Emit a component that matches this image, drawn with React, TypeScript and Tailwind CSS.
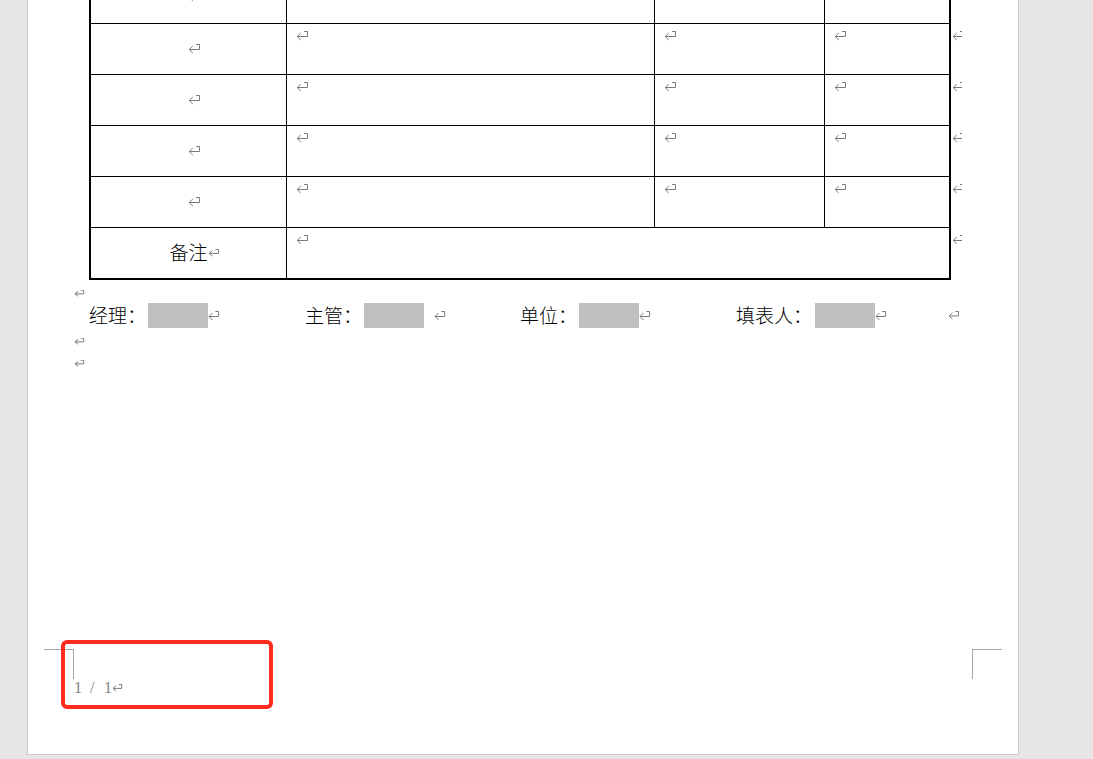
import React from "react";

function Ret({ w = 13, h = 10, className = "" }: { w?: number; h?: number; className?: string }) {
  return (
    <svg
      width={w}
      height={h}
      viewBox="0 0 13 10"
      preserveAspectRatio="none"
      className={"block shrink-0 " + className}
      fill="none"
      stroke="#7a7a7a"
      strokeWidth={1}
    >
      <path d="M8 0.5H11.5V5.5H1.2" vectorEffect="non-scaling-stroke" />
      <path d="M4.8 2L1.2 5.5L4.8 9" vectorEffect="non-scaling-stroke" />
    </svg>
  );
}

function Outside() {
  return (
    <div className="w-[11px] overflow-hidden pt-[7px] pl-[1px]">
      <Ret />
    </div>
  );
}

function BodyRow() {
  return (
    <div className="flex">
      <div className="flex h-[51px] w-[862px] border-b border-l-2 border-r-2 border-black">
        <div className="flex w-[196px] items-center justify-center border-r border-black pl-[12px]">
          <Ret />
        </div>
        <div className="w-[368px] border-r border-black pl-[9px] pt-[7px]">
          <Ret />
        </div>
        <div className="w-[170px] border-r border-black pl-[9px] pt-[7px]">
          <Ret />
        </div>
        <div className="flex-1 pl-[9px] pt-[7px]">
          <Ret />
        </div>
      </div>
      <Outside />
    </div>
  );
}

function Field({ label, labelW, gap = 0, groupW }: { label: string; labelW: string; gap?: number; groupW: string }) {
  return (
    <div className={"flex h-[25px] items-center " + groupW}>
      <span className={"translate-y-[2px] whitespace-nowrap " + labelW}>{label}</span>
      <div className="h-[25px] w-[60px] bg-[#c0c0c0]" />
      {gap ? <div className="w-[10px]" /> : null}
      <Ret w={12} h={10} />
    </div>
  );
}

export default function App() {
  return (
    <div className="h-[759px] w-[1093px] overflow-hidden bg-[#e6e6e6] font-[family-name:Liberation_Serif,Noto_Sans_CJK_SC,serif] text-black">
      <div className="relative ml-[27px] flex h-[755px] w-[992px] flex-col border-b border-l border-r border-[#c8c8c8] bg-white">
        {/* table */}
        <div className="ml-[61px] flex flex-col">
          <div className="flex">
            <div className="flex h-[24px] w-[862px] border-b border-l-2 border-r-2 border-black">
              <div className="flex w-[196px] items-start justify-center border-r border-black pl-[12px]">
                <Ret className="-mt-[8px]" />
              </div>
              <div className="w-[368px] border-r border-black" />
              <div className="w-[170px] border-r border-black" />
              <div className="flex-1" />
            </div>
          </div>
          <BodyRow />
          <BodyRow />
          <BodyRow />
          <BodyRow />
          <div className="flex">
            <div className="flex h-[52px] w-[862px] border-b-2 border-l-2 border-r-2 border-black">
              <div className="flex w-[196px] items-center justify-center border-r border-black pl-[12px] text-[19px] font-light">
                <span className="translate-y-[1px]">备注</span>
                <Ret w={12} h={8} />
              </div>
              <div className="flex-1 pl-[9px] pt-[7px]">
                <Ret />
              </div>
            </div>
            <Outside />
          </div>
        </div>

        {/* empty paragraph */}
        <div className="ml-[46px] mt-[10px]">
          <Ret w={11} h={7} />
        </div>

        {/* signatures */}
        <div className="ml-[61px] mt-[6px] flex h-[25px] items-center text-[19px] font-light">
          <Field label="经理：" labelW="w-[59px]" groupW="w-[216px]" />
          <Field label="主管：" labelW="w-[59px]" gap={1} groupW="w-[215px]" />
          <Field label="单位：" labelW="w-[59px]" groupW="w-[216px]" />
          <Field label="填表人：" labelW="w-[79px]" groupW="w-[151px]" />
          <div className="ml-[61px] w-[11px] overflow-hidden">
            <Ret w={12} h={9} />
          </div>
        </div>

        <div className="ml-[46px] mt-[10px]">
          <Ret w={11} h={7} />
        </div>
        <div className="ml-[46px] mt-[15px]">
          <Ret w={11} h={7} />
        </div>

        {/* crop marks */}
        <div className="mt-[282px] flex justify-between px-[16px]">
          <div className="h-[30px] w-[30px] border-r border-t border-[#a6a6a6]" />
          <div className="h-[30px] w-[30px] border-l border-t border-[#a6a6a6]" />
        </div>

        {/* page number */}
        <div className="ml-[46px] flex h-[18px] items-center text-[16px] leading-[18px] text-[#808080]">
          <span>1</span>
          <span className="ml-[8px]">/</span>
          <span className="ml-[9.5px]">1</span>
          <Ret w={11} h={8} />
        </div>

        {/* annotation overlay */}
        <div className="absolute left-[33px] top-[640px] h-[69px] w-[212px] rounded-[6px] border-[4px] border-[#fe2a1e]" />
      </div>
    </div>
  );
}
